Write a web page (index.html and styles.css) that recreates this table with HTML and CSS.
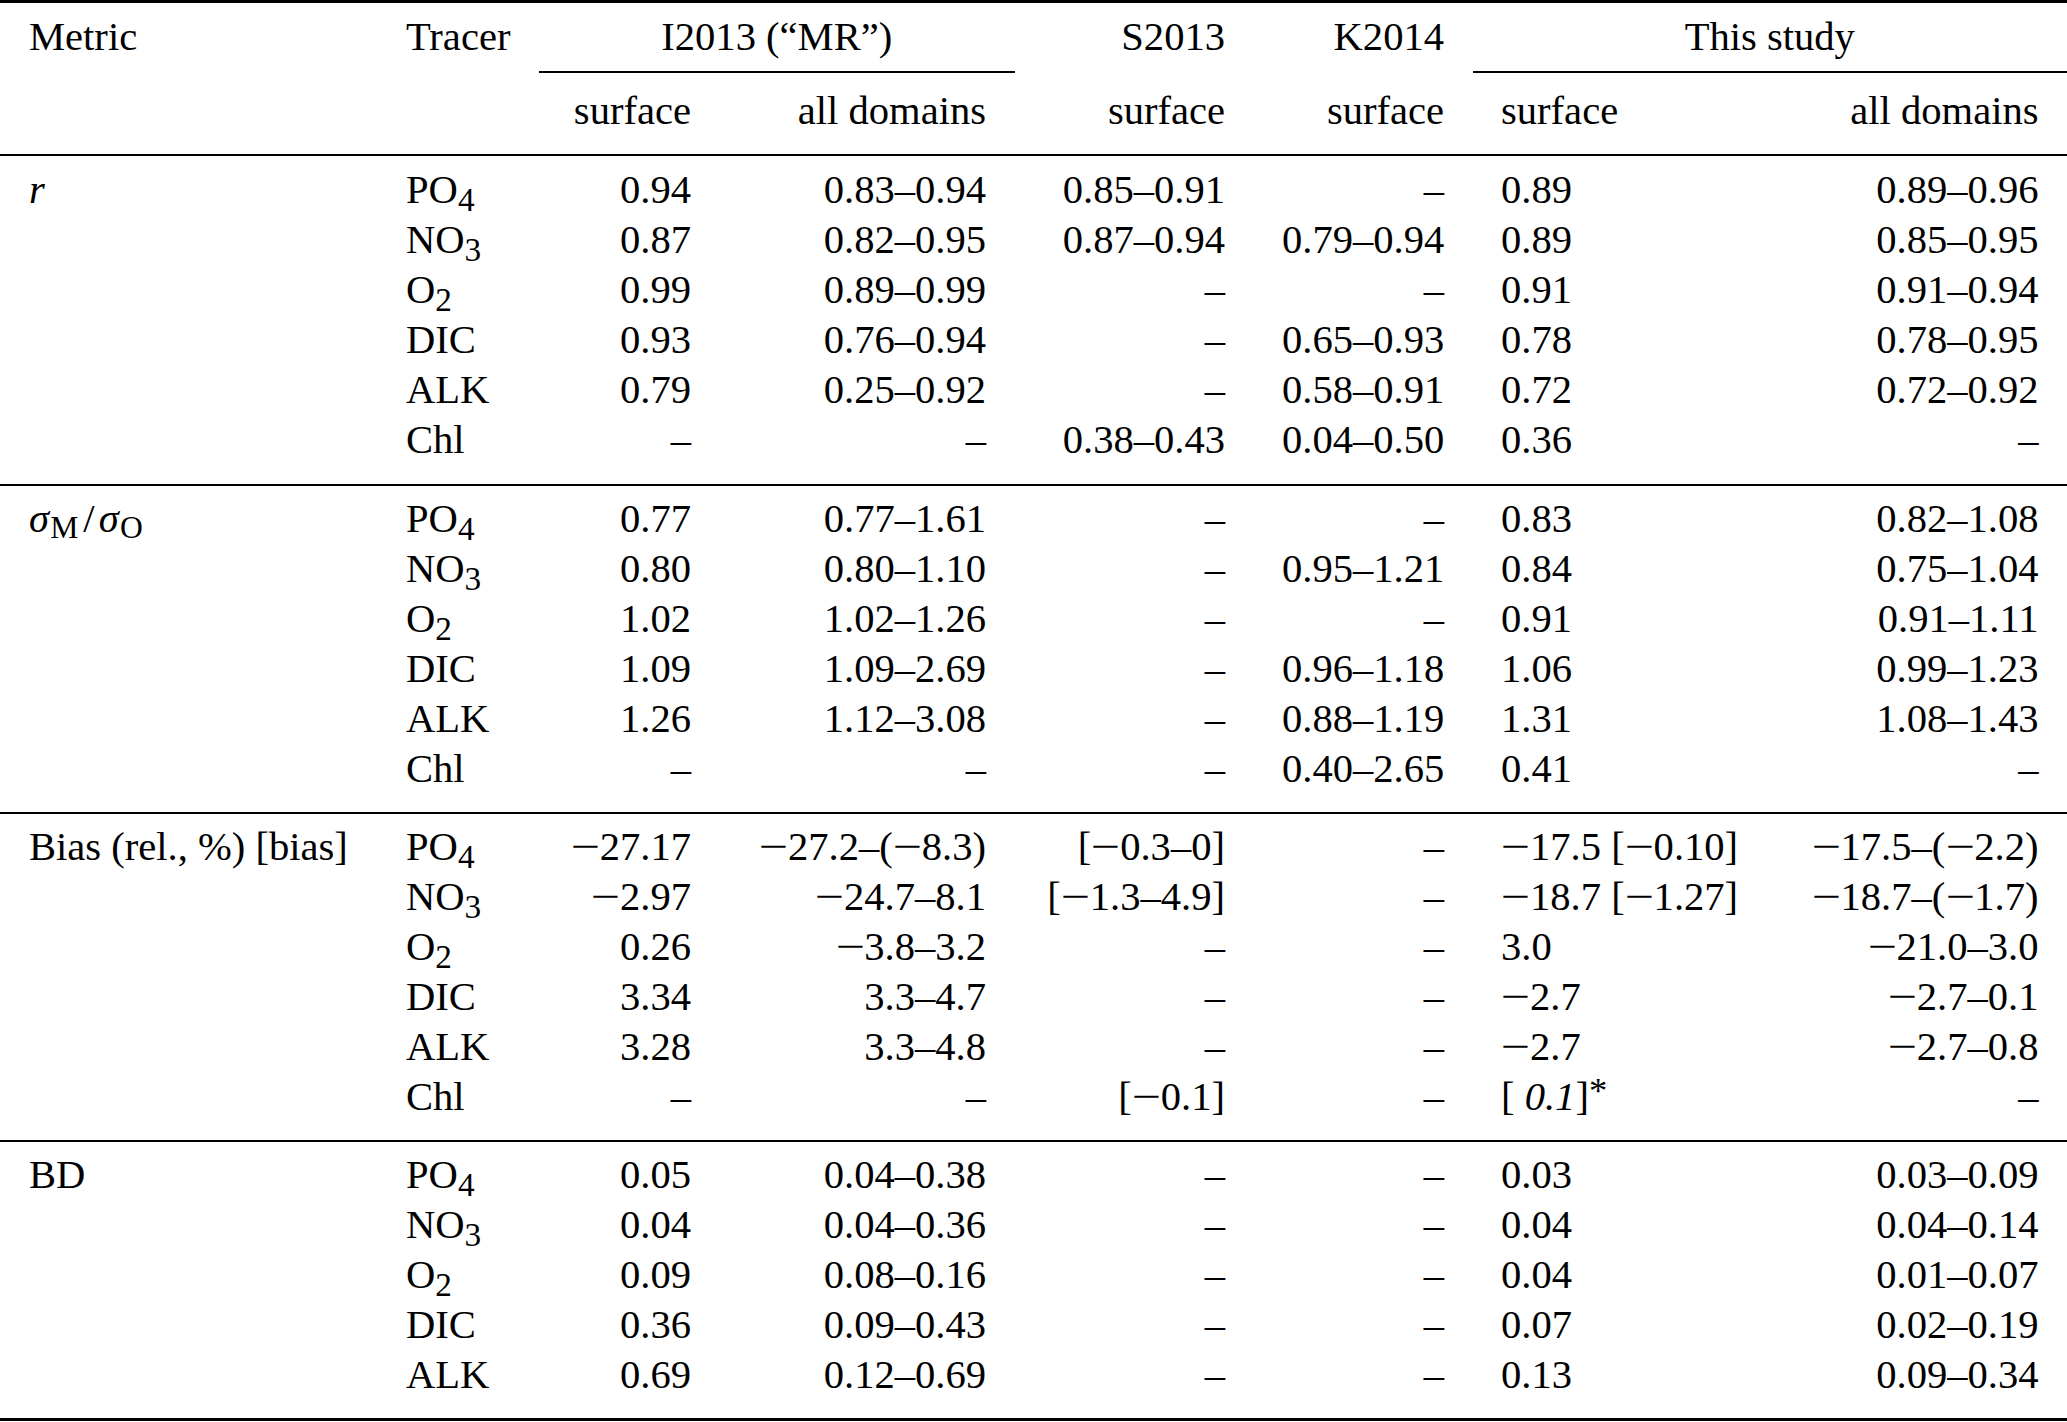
FILE: index.html
```html
<!DOCTYPE html>
<html lang="en">
<head>
<meta charset="utf-8">
<title>Metric comparison table</title>
<link rel="stylesheet" href="styles.css">
</head>
<body>
<table class="tbl">
  <colgroup>
    <col class="w1"><col class="w2"><col class="w3"><col class="w4"><col class="w5"><col class="w6"><col class="w7"><col class="w8">
  </colgroup>
  <thead>
    <tr class="h1">
      <th class="l">Metric</th>
      <th class="l">Tracer</th>
      <th class="c span" colspan="2">I2013 (“MR”)</th>
      <th class="r">S2013</th>
      <th class="r">K2014</th>
      <th class="c span" colspan="2">This study</th>
    </tr>
    <tr class="h2">
      <th></th>
      <th></th>
      <th class="r">surface</th>
      <th class="r">all domains</th>
      <th class="r">surface</th>
      <th class="r">surface</th>
      <th class="l">surface</th>
      <th class="r">all domains</th>
    </tr>
  </thead>
  <tbody class="sec s1">
    <tr class="first"><td><i>r</i></td><td>PO<sub>4</sub></td><td>0.94</td><td>0.83–0.94</td><td>0.85–0.91</td><td>–</td><td>0.89</td><td>0.89–0.96</td></tr>
    <tr><td></td><td>NO<sub>3</sub></td><td>0.87</td><td>0.82–0.95</td><td>0.87–0.94</td><td>0.79–0.94</td><td>0.89</td><td>0.85–0.95</td></tr>
    <tr><td></td><td>O<sub>2</sub></td><td>0.99</td><td>0.89–0.99</td><td>–</td><td>–</td><td>0.91</td><td>0.91–0.94</td></tr>
    <tr><td></td><td>DIC</td><td>0.93</td><td>0.76–0.94</td><td>–</td><td>0.65–0.93</td><td>0.78</td><td>0.78–0.95</td></tr>
    <tr><td></td><td>ALK</td><td>0.79</td><td>0.25–0.92</td><td>–</td><td>0.58–0.91</td><td>0.72</td><td>0.72–0.92</td></tr>
    <tr class="last"><td></td><td>Chl</td><td>–</td><td>–</td><td>0.38–0.43</td><td>0.04–0.50</td><td>0.36</td><td>–</td></tr>
  </tbody>
  <tbody class="sec ruled">
    <tr class="first"><td><i class="sig">σ</i><sub class="ms">M</sub><span class="slash">/</span><i class="sig">σ</i><sub class="ms">O</sub></td><td>PO<sub>4</sub></td><td>0.77</td><td>0.77–1.61</td><td>–</td><td>–</td><td>0.83</td><td>0.82–1.08</td></tr>
    <tr><td></td><td>NO<sub>3</sub></td><td>0.80</td><td>0.80–1.10</td><td>–</td><td>0.95–1.21</td><td>0.84</td><td>0.75–1.04</td></tr>
    <tr><td></td><td>O<sub>2</sub></td><td>1.02</td><td>1.02–1.26</td><td>–</td><td>–</td><td>0.91</td><td>0.91–1.11</td></tr>
    <tr><td></td><td>DIC</td><td>1.09</td><td>1.09–2.69</td><td>–</td><td>0.96–1.18</td><td>1.06</td><td>0.99–1.23</td></tr>
    <tr><td></td><td>ALK</td><td>1.26</td><td>1.12–3.08</td><td>–</td><td>0.88–1.19</td><td>1.31</td><td>1.08–1.43</td></tr>
    <tr class="last"><td></td><td>Chl</td><td>–</td><td>–</td><td>–</td><td>0.40–2.65</td><td>0.41</td><td>–</td></tr>
  </tbody>
  <tbody class="sec ruled">
    <tr class="first"><td>Bias (rel., %) [bias]</td><td>PO<sub>4</sub></td><td><span class="neg">−</span>27.17</td><td><span class="neg">−</span>27.2–(<span class="neg">−</span>8.3)</td><td>[<span class="neg">−</span>0.3–0]</td><td>–</td><td><span class="neg">−</span>17.5 [<span class="neg">−</span>0.10]</td><td><span class="neg">−</span>17.5–(<span class="neg">−</span>2.2)</td></tr>
    <tr><td></td><td>NO<sub>3</sub></td><td><span class="neg">−</span>2.97</td><td><span class="neg">−</span>24.7–8.1</td><td>[<span class="neg">−</span>1.3–4.9]</td><td>–</td><td><span class="neg">−</span>18.7 [<span class="neg">−</span>1.27]</td><td><span class="neg">−</span>18.7–(<span class="neg">−</span>1.7)</td></tr>
    <tr><td></td><td>O<sub>2</sub></td><td>0.26</td><td><span class="neg">−</span>3.8–3.2</td><td>–</td><td>–</td><td>3.0</td><td><span class="neg">−</span>21.0–3.0</td></tr>
    <tr><td></td><td>DIC</td><td>3.34</td><td>3.3–4.7</td><td>–</td><td>–</td><td><span class="neg">−</span>2.7</td><td><span class="neg">−</span>2.7–0.1</td></tr>
    <tr><td></td><td>ALK</td><td>3.28</td><td>3.3–4.8</td><td>–</td><td>–</td><td><span class="neg">−</span>2.7</td><td><span class="neg">−</span>2.7–0.8</td></tr>
    <tr class="last"><td></td><td>Chl</td><td>–</td><td>–</td><td>[<span class="neg">−</span>0.1]</td><td>–</td><td>[ <i>0.1</i>]<span class="ast">*</span></td><td>–</td></tr>
  </tbody>
  <tbody class="sec ruled">
    <tr class="first"><td>BD</td><td>PO<sub>4</sub></td><td>0.05</td><td>0.04–0.38</td><td>–</td><td>–</td><td>0.03</td><td>0.03–0.09</td></tr>
    <tr><td></td><td>NO<sub>3</sub></td><td>0.04</td><td>0.04–0.36</td><td>–</td><td>–</td><td>0.04</td><td>0.04–0.14</td></tr>
    <tr><td></td><td>O<sub>2</sub></td><td>0.09</td><td>0.08–0.16</td><td>–</td><td>–</td><td>0.04</td><td>0.01–0.07</td></tr>
    <tr><td></td><td>DIC</td><td>0.36</td><td>0.09–0.43</td><td>–</td><td>–</td><td>0.07</td><td>0.02–0.19</td></tr>
    <tr class="last"><td></td><td>ALK</td><td>0.69</td><td>0.12–0.69</td><td>–</td><td>–</td><td>0.13</td><td>0.09–0.34</td></tr>
  </tbody>
</table>
</body>
</html>
```

FILE: styles.css
```css
html, body {
  margin: 0;
  padding: 0;
  background: #ffffff;
  overflow: hidden;
}

.tbl {
  width: 2067px;
  table-layout: fixed;
  border-collapse: separate;
  border-spacing: 0;
  border-top: 3px solid #000;
  border-bottom: 3px solid #000;
  font-family: "Liberation Serif", "Times New Roman", serif;
  font-size: 40.6px;
  line-height: 50px;
  color: #000;
}

.w1 { width: 377.5px; }
.w2 { width: 161.5px; }
.w3 { width: 180.5px; }
.w4 { width: 295px; }
.w5 { width: 239px; }
.w6 { width: 219px; }
.w7 { width: 302px; }
.w8 { width: 292.5px; }

.tbl th,
.tbl td {
  padding: 0 28.5px;
  font-weight: normal;
  white-space: nowrap;
  vertical-align: baseline;
  text-align: right;
}

.tbl td:nth-child(1),
.tbl td:nth-child(2),
.tbl td:nth-child(7) {
  text-align: left;
}

.tbl td:nth-child(1) { padding-left: 29px; }

.tbl .l { text-align: left; }
.tbl .r { text-align: right; }
.tbl .c { text-align: center; }

/* header rows */
.h1 th {
  padding-top: 9px;
  padding-bottom: 9px;
  border-bottom: 2px solid transparent;
}
.h1 th:first-child { padding-left: 29px; }
.h1 th.span { border-bottom-color: #000; }

.h2 th {
  padding-top: 13px;
  padding-bottom: 18px;
  border-bottom: 2px solid #000;
}

/* body sections */
.sec tr.first td { padding-top: 8px; }
.s1 tr.first td { padding-top: 9px; }
.sec tr.last td { padding-bottom: 18px; }
.s1 tr.last td { padding-bottom: 19px; }
.ruled tr.first td { border-top: 2px solid #000; }

sub {
  font-size: 0.82em;
  vertical-align: -0.24em;
  line-height: 0;
}
sub.ms {
  font-size: 0.78em;
  vertical-align: -0.2em;
  margin-left: 0.04em;
}
.slash {
  padding: 0 0.1em 0 0.12em;
}

.ast {
  font-size: 0.9em;
  vertical-align: 0.2em;
  line-height: 0;
}

.neg {
  display: inline-block;
  transform: scaleX(1.28);
  margin: 0 0.07em 0 0.08em;
}
```
